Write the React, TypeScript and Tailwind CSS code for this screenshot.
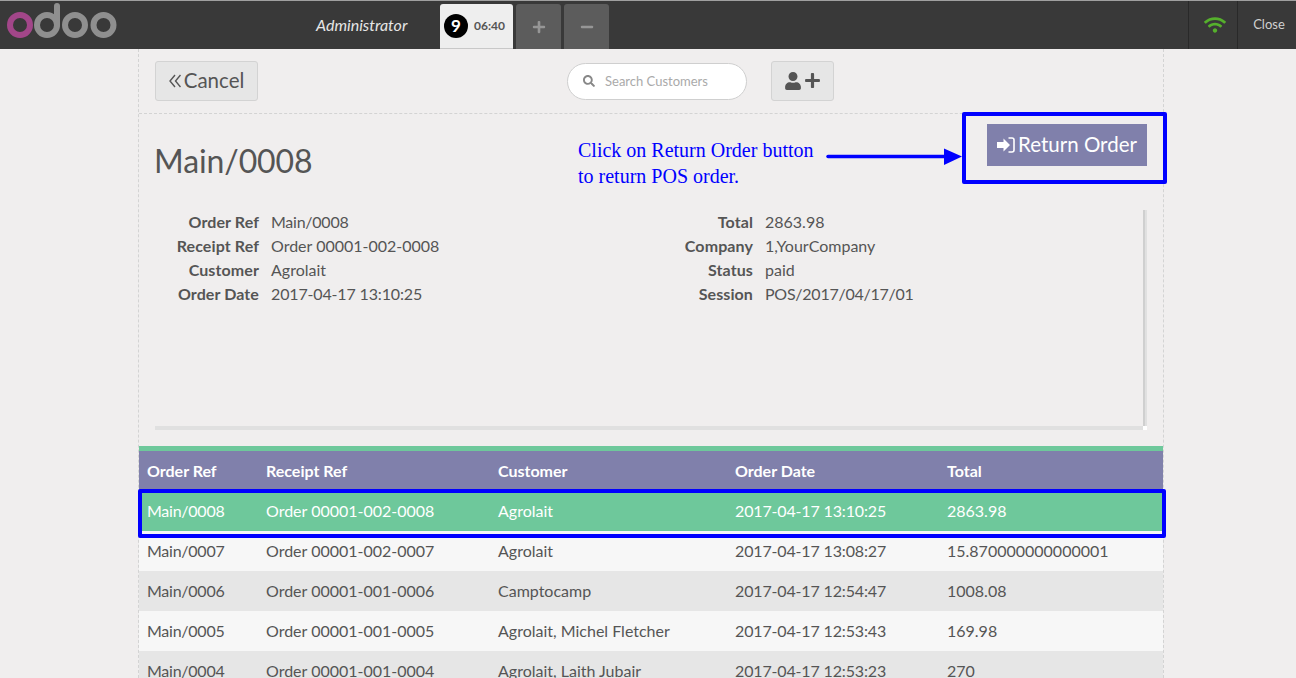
import { FaSearch, FaUser, FaPlus, FaMinus, FaWifi } from "react-icons/fa";

const rows = [
  ["Main/0007", "Order 00001-002-0007", "Agrolait", "2017-04-17 13:08:27", "15.870000000000001"],
  ["Main/0006", "Order 00001-001-0006", "Camptocamp", "2017-04-17 12:54:47", "1008.08"],
  ["Main/0005", "Order 00001-001-0005", "Agrolait, Michel Fletcher", "2017-04-17 12:53:43", "169.98"],
  ["Main/0004", "Order 00001-001-0004", "Agrolait, Laith Jubair", "2017-04-17 12:53:23", "270"],
];

const leftDetails = [
  ["Order Ref", "Main/0008"],
  ["Receipt Ref", "Order 00001-002-0008"],
  ["Customer", "Agrolait"],
  ["Order Date", "2017-04-17 13:10:25"],
];

const rightDetails = [
  ["Total", "2863.98"],
  ["Company", "1,YourCompany"],
  ["Status", "paid"],
  ["Session", "POS/2017/04/17/01"],
];

const cols = "grid grid-cols-[119px_232px_237px_212px_224px] items-center h-10";

// slashes and timestamps sit tighter in the reference
const tighten = (text: string) => {
  if (text.includes("/")) return "tracking-[-0.25px]";
  if (text.includes(":")) return "tracking-[-0.15px]";
  return "";
};

function OdooLogo() {
  return (
    <svg width="112" height="40" viewBox="0 0 112 40" fill="none" strokeWidth="6">
      <circle cx="14" cy="24" r="10" stroke="#a24689" />
      <circle cx="41" cy="24" r="10" stroke="#8f8f8f" />
      <path d="M51 24V5" stroke="#8f8f8f" strokeLinecap="round" />
      <circle cx="69" cy="24" r="10" stroke="#8f8f8f" />
      <circle cx="97.5" cy="24" r="10" stroke="#8f8f8f" />
    </svg>
  );
}

function ReturnIcon() {
  return (
    <svg width="18" height="16" viewBox="0 0 18 16">
      <path d="M0 5h6.5V1.5L13 8l-6.5 6.500V11H0z" fill="currentColor" />
      <path d="M11.500 1h3.500a2 2 0 0 1 2 2v10a2 2 0 0 1-2 2h-3.500" fill="none" stroke="currentColor" strokeWidth="1.6" />
    </svg>
  );
}

function DoubleLeft() {
  return (
    <svg width="12" height="14" viewBox="0 0 12 14" fill="none" stroke="currentColor" strokeWidth="1.4">
      <path d="M6 1 1 7l5 6" />
      <path d="M11.500 1 6.500 7l5 6" />
    </svg>
  );
}

function DetailColumn({ items }: { items: string[][] }) {
  return (
    <div className="flex flex-col">
      {items.map(([label, value]) => (
        <div key={label} className="flex h-6 items-center">
          <span className="w-[104px] text-right font-bold tracking-[0.1px]">{label}</span>
          <span className={`ml-3 ${tighten(value)}`}>{value}</span>
        </div>
      ))}
    </div>
  );
}

export default function App() {
  return (
    <div className="relative h-[678px] overflow-hidden bg-[#f0eeee] text-[16px] text-[#555555] font-['Lato','Open_Sans',sans-serif]">
      {/* Header */}
      <header className="flex h-[49px] items-stretch border-t border-[#a0a0a0] bg-[#393939]">
        <div className="w-[316px] pl-[6px]">
          <OdooLogo />
        </div>
        <div className="flex w-[124px] items-center pb-[1px] text-[16px] italic text-[#e6e6e6]">Administrator</div>
        <div className="mt-[3px] flex w-[73px] items-center rounded-t-[3px] border-b border-[#c8c8c8] bg-[#eeeeee] pl-[4px]">
          <span className="flex h-6 w-6 items-center justify-center rounded-full bg-black text-[17px] font-bold text-white">9</span>
          <span className="ml-[6px] text-[12px] font-bold text-[#555555]">06:40</span>
        </div>
        <div className="mt-[3px] ml-[3px] flex w-[45px] items-center justify-center rounded-t-[3px] bg-[#5c5c5c] text-[#969696]">
          <FaPlus size={14} />
        </div>
        <div className="mt-[3px] ml-[3px] flex w-[45px] items-center justify-center rounded-t-[3px] bg-[#5c5c5c] text-[#969696]">
          <FaMinus size={14} />
        </div>
        <div className="ml-auto flex">
          <div className="flex w-[49px] items-center justify-center border-l border-[#292929] pl-[3px] text-[#55b02c]">
            <FaWifi size={22} />
          </div>
          <div className="flex w-[59px] items-center justify-center border-l border-[#292929] pl-[4px] text-[13px] text-[#d0d0d0]">Close</div>
        </div>
      </header>

      {/* Main column */}
      <main className="ml-[138px] h-[629px] w-[1026px] border-x border-dashed border-[#d3d3d3]">
        <div className="flex h-[65px] items-center border-b border-dashed border-[#d3d3d3] pb-[1px] pl-4">
          <button className="flex h-10 w-[103px] items-center justify-center rounded-[3px] border border-[#d3d3d3] bg-[#e6e6e6] text-[20.5px]">
            <DoubleLeft />
            <span className="ml-[3px]">Cancel</span>
          </button>
          <div className="mt-[1px] ml-[309px] flex h-[37px] w-[180px] items-center rounded-full border border-[#cfcfcf] bg-white pl-[15px] text-[13px] text-[#aaaaaa]">
            <FaSearch size={12} className="text-[#888888]" />
            <span className="ml-[10px] pt-[2px]">Search Customers</span>
          </div>
          <button className="ml-6 flex h-10 w-[63px] items-center justify-center rounded-[3px] border border-[#d3d3d3] bg-[#e6e6e6] text-[#555555]">
            <FaUser size={18} />
            <FaPlus size={17} className="ml-[2px]" />
          </button>
        </div>

        {/* Order detail */}
        <section className="relative h-[332px] px-4">
          <div className="flex h-[96px] items-start justify-between">
            <h1 className="mt-[27px] -ml-[1px] text-[32px] leading-[40px] tracking-[-0.1px]">Main/0008</h1>
            <button className="mt-[10px] flex h-[42px] w-[160px] items-center justify-center bg-[#8080ab] pb-[1px] text-[20.5px] text-white">
              <ReturnIcon />
              <span className="ml-[3px]">Return Order</span>
            </button>
          </div>
          <div className="relative h-[220px] w-[992px] border-r-2 border-b-4 border-[#e0e0e0]">
            <div className="flex h-full items-start border-r-2 border-[#cfcfcf]">
              <div className="w-[494px]">
                <DetailColumn items={leftDetails} />
              </div>
              <DetailColumn items={rightDetails} />
            </div>
            <span className="absolute -right-[2px] -bottom-1 h-1 w-1 bg-white" />
          </div>
        </section>

        {/* Orders table */}
        <div className="border-t-[5px] border-[#6ec89b]">
          <div className={`${cols} bg-[#8080ab] font-bold text-white [&>span]:pl-2`}>
            <span>Order Ref</span>
            <span>Receipt Ref</span>
            <span>Customer</span>
            <span>Order Date</span>
            <span>Total</span>
          </div>
          <div className={`${cols} bg-[#6ec89b] text-white [&>span]:pl-2`}>
            <span className={tighten("Main/0008")}>Main/0008</span>
            <span>Order 00001-002-0008</span>
            <span>Agrolait</span>
            <span className={tighten("13:10:25")}>2017-04-17 13:10:25</span>
            <span>2863.98</span>
          </div>
          {rows.map((row, i) => (
            <div key={row[0]} className={`${cols} [&>span]:pl-2 ${i % 2 === 0 ? "bg-[#f7f7f7]" : "bg-[#e6e6e6]"}`}>
              {row.map((cell) => (
                <span key={cell} className={tighten(cell)}>
                  {cell}
                </span>
              ))}
            </div>
          ))}
        </div>
      </main>

      {/* Tutorial annotations */}
      <div className="absolute left-[962px] top-[112px] h-[72px] w-[205px] rounded-[2px] border-4 border-[#0000ff]" />
      <div className="absolute left-[138px] top-[489px] h-[49px] w-[1028px] rounded-[2px] border-4 border-[#0000ff]" />
      <p className="absolute left-[578px] top-[137px] text-[20px] leading-[26px] text-[#0000ff] font-['Liberation_Serif',serif]">
        Click on Return Order button
        <br />
        to return POS order.
      </p>
      <svg className="absolute left-[826px] top-[148px]" width="136" height="18" viewBox="0 0 136 18">
        <path d="M2 8.5H120" stroke="#0000ff" strokeWidth="3.5" strokeLinecap="round" />
        <path d="M118 0.5L136 8.5L118 17Z" fill="#0000ff" />
      </svg>
    </div>
  );
}
